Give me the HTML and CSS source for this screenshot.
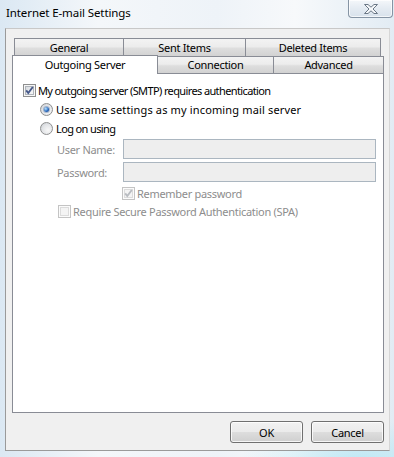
FILE: index.html
```html
<!DOCTYPE html>
<html>
<head>
<meta charset="utf-8">
<link rel="stylesheet" href="styles.css">
</head>
<body>
<div class="window">
  <div class="titlebar">
    <div class="title">Internet E-mail Settings</div>
    <div class="close">
      <svg width="16" height="10" viewBox="0 0 16 10"><path d="M1.5 0.5 H5 L8 3.2 L11 0.5 H14.5 L10 5 L14.5 9.5 H11 L8 6.8 L5 9.5 H1.5 L6 5 Z" fill="#f6f8fa" stroke="#6b7886" stroke-width="1" stroke-linejoin="round"/></svg>
    </div>
  </div>
  <div class="client">
    <div class="tabs">
      <div class="tabrow back">
        <div class="tab w-general">General</div>
        <div class="tab w-sent">Sent Items</div>
        <div class="tab w-deleted">Deleted Items</div>
      </div>
      <div class="tabrow front">
        <div class="tab selected w-outgoing">Outgoing Server</div>
        <div class="tab w-connection">Connection</div>
        <div class="tab w-advanced">Advanced</div>
      </div>
    </div>
    <div class="panel">
      <div class="row">
        <span class="cb"><svg width="11" height="11" viewBox="0 0 11 11"><path d="M2.2 5.3 L4.3 8 L8.8 2" stroke="#46598a" stroke-width="1.9" fill="none"/></svg></span>
        <span class="label tight">My outgoing server (SMTP) requires authentication</span>
      </div>
      <div class="row indent1">
        <span class="rb"><span class="dot"></span></span>
        <span class="label loose">Use same settings as my incoming mail server</span>
      </div>
      <div class="row indent1">
        <span class="rb"></span>
        <span class="label tight">Log on using</span>
      </div>
      <div class="field first">
        <span class="flabel">User Name:</span>
        <span class="input"></span>
      </div>
      <div class="field">
        <span class="flabel">Password:</span>
        <span class="input"></span>
      </div>
      <div class="row small indent3">
        <span class="cb disabled"><svg width="11" height="11" viewBox="0 0 11 11"><path d="M2.2 5.3 L4.3 8 L8.8 2" stroke="#b9bcc1" stroke-width="1.9" fill="none"/></svg></span>
        <span class="label muted">Remember password</span>
      </div>
      <div class="row small indent2">
        <span class="cb disabled"></span>
        <span class="label muted">Require Secure Password Authentication (SPA)</span>
      </div>
    </div>
    <div class="buttons">
      <div class="btn">OK</div>
      <div class="btn">Cancel</div>
    </div>
  </div>
</div>
</body>
</html>
```
FILE: styles.css
```css
html, body {
  margin: 0;
  padding: 0;
}
body {
  width: 394px;
  height: 457px;
  overflow: hidden;
  font-family: "Noto Sans", "DejaVu Sans", sans-serif;
  font-size: 11px;
  letter-spacing: -0.3px;
  color: #000;
  background:
    radial-gradient(ellipse 120px 40px at 360px 460px, #bfe9f5 0%, rgba(191,233,245,0) 100%),
    linear-gradient(to right, #dbe8f3 0%, #f4f7fa 25%, #eef3f8 55%, #f7f9fb 75%, #e2ecf4 100%);
}
.window {
  width: 394px;
  height: 457px;
  display: flex;
  flex-direction: column;
}
.titlebar {
  height: 28px;
  display: flex;
  justify-content: space-between;
  align-items: flex-start;
  flex: none;
}
.title {
  padding: 5px 0 0 6px;
  font-size: 11.5px;
  letter-spacing: -0.1px;
  color: #000;
}
.close {
  width: 45px;
  height: 18px;
  margin-right: 1px;
  box-sizing: border-box;
  border: 1px solid #8594a4;
  border-top: none;
  border-radius: 0 0 4px 4px;
  background: linear-gradient(#f4f7fa, #e4ebf2 50%, #d8e2ec);
  display: flex;
  align-items: center;
  justify-content: center;
  box-shadow: inset 0 0 0 1px rgba(255,255,255,0.7);
}
.close svg { display: block; margin-top: 1px; }

.client {
  margin: 0 4px 0 5px;
  height: 423px;
  box-sizing: border-box;
  background: #f0f0f0;
  border: 1px solid #9a9a9a;
  border-top-color: #c8c8c8;
  border-right-color: #d6d6d6;
  padding: 9px 0 0 6px;
  display: flex;
  flex-direction: column;
}
.tabs {
  display: flex;
  flex-direction: column;
}
.tabrow {
  display: flex;
}
.tabrow.back {
  margin-left: 2px;
  height: 18px;
}
.tabrow.front {
  height: 17px;
  align-items: flex-end;
}
.tab {
  box-sizing: border-box;
  height: 18px;
  border: 1px solid #898c95;
  border-bottom: none;
  margin-left: -1px;
  background: linear-gradient(#f3f3f3 0%, #ececec 45%, #dedede 55%, #d2d2d2 100%);
  display: flex;
  align-items: center;
  justify-content: center;
  white-space: nowrap;
  line-height: 1;
  padding-bottom: 1px;
}
.tab:first-child { margin-left: 0; }
.front .tab { height: 17px; }
.front .tab.selected {
  height: 19px;
  background: #fff;
  position: relative;
  z-index: 1;
  margin-bottom: -1px;
  border-color: #898c95;
  padding-bottom: 2px;
}
.w-general { width: 110px; }
.w-sent { width: 123px; }
.w-deleted { width: 136px; }
.w-outgoing { width: 146px; }
.w-connection { width: 117px; }
.w-advanced { width: 111px; }

.panel {
  width: 372px;
  height: 340px;
  box-sizing: border-box;
  background: #fff;
  border: 1px solid #898c95;
  padding: 7px 7px 0 10px;
  display: flex;
  flex-direction: column;
}
.row {
  height: 19px;
  display: flex;
  align-items: center;
  gap: 2px;
}
.row.small { height: 18px; }
.indent1 { padding-left: 17px; gap: 3px; }
.indent2 { padding-left: 35px; }
.indent3 { padding-left: 99px; }
.row.indent3 { margin-top: 2px; }
.label { white-space: nowrap; line-height: 1; }
.label.tight { letter-spacing: -0.62px; }
.label.loose { letter-spacing: 0.15px; }
.muted { color: #8d8d8d; }

.cb {
  width: 13px;
  height: 13px;
  box-sizing: border-box;
  border: 1px solid #8e8f8f;
  background: linear-gradient(135deg, #cdd1d6 0%, #eef0f2 60%, #f8f8f8 100%);
  box-shadow: inset 0 0 0 1px #f6f6f6, inset 0 0 0 2px #b0b5bb;
  flex: none;
}
.cb svg { display: block; }
.cb.disabled {
  border-color: #c4c4c4;
  background: #f4f4f4;
  box-shadow: inset 0 0 0 1px #fbfbfb, inset 0 0 0 2px #dcdcdc;
}
.rb {
  width: 13px;
  height: 13px;
  box-sizing: border-box;
  border-radius: 50%;
  border: 1px solid #8e8f8f;
  background: radial-gradient(circle at 65% 65%, #f8f8f8 0%, #e2e4e7 55%, #c3c7cd 100%);
  display: flex;
  align-items: center;
  justify-content: center;
  flex: none;
}
.dot {
  width: 5px;
  height: 5px;
  border-radius: 50%;
  background: radial-gradient(circle at 35% 35%, #b9e4ff 0%, #2a6bc0 55%, #0f3474 100%);
  box-shadow: 0 0 0 1px rgba(40,80,140,0.35);
}

.field {
  display: flex;
  align-items: center;
  padding-left: 34px;
  height: 20px;
  margin-top: 3px;
}
.field.first { margin-top: 1px; }
.flabel {
  width: 66px;
  color: #8d8d8d;
  white-space: nowrap;
  flex: none;
}
.input {
  flex: 1;
  height: 20px;
  box-sizing: border-box;
  border: 1px solid #abb6c0;
  background: #eeeeee;
}

.buttons {
  display: flex;
  justify-content: flex-end;
  gap: 8px;
  margin-top: 8px;
  padding-right: 5px;
}
.btn {
  width: 73px;
  height: 22px;
  box-sizing: border-box;
  border: 1px solid #707070;
  border-radius: 3px;
  background: linear-gradient(#f2f2f2 0%, #ebebeb 48%, #dddddd 52%, #cfcfcf 100%);
  box-shadow: inset 0 0 0 1px rgba(255,255,255,0.8);
  display: flex;
  align-items: center;
  justify-content: center;
  line-height: 1;
}
```
